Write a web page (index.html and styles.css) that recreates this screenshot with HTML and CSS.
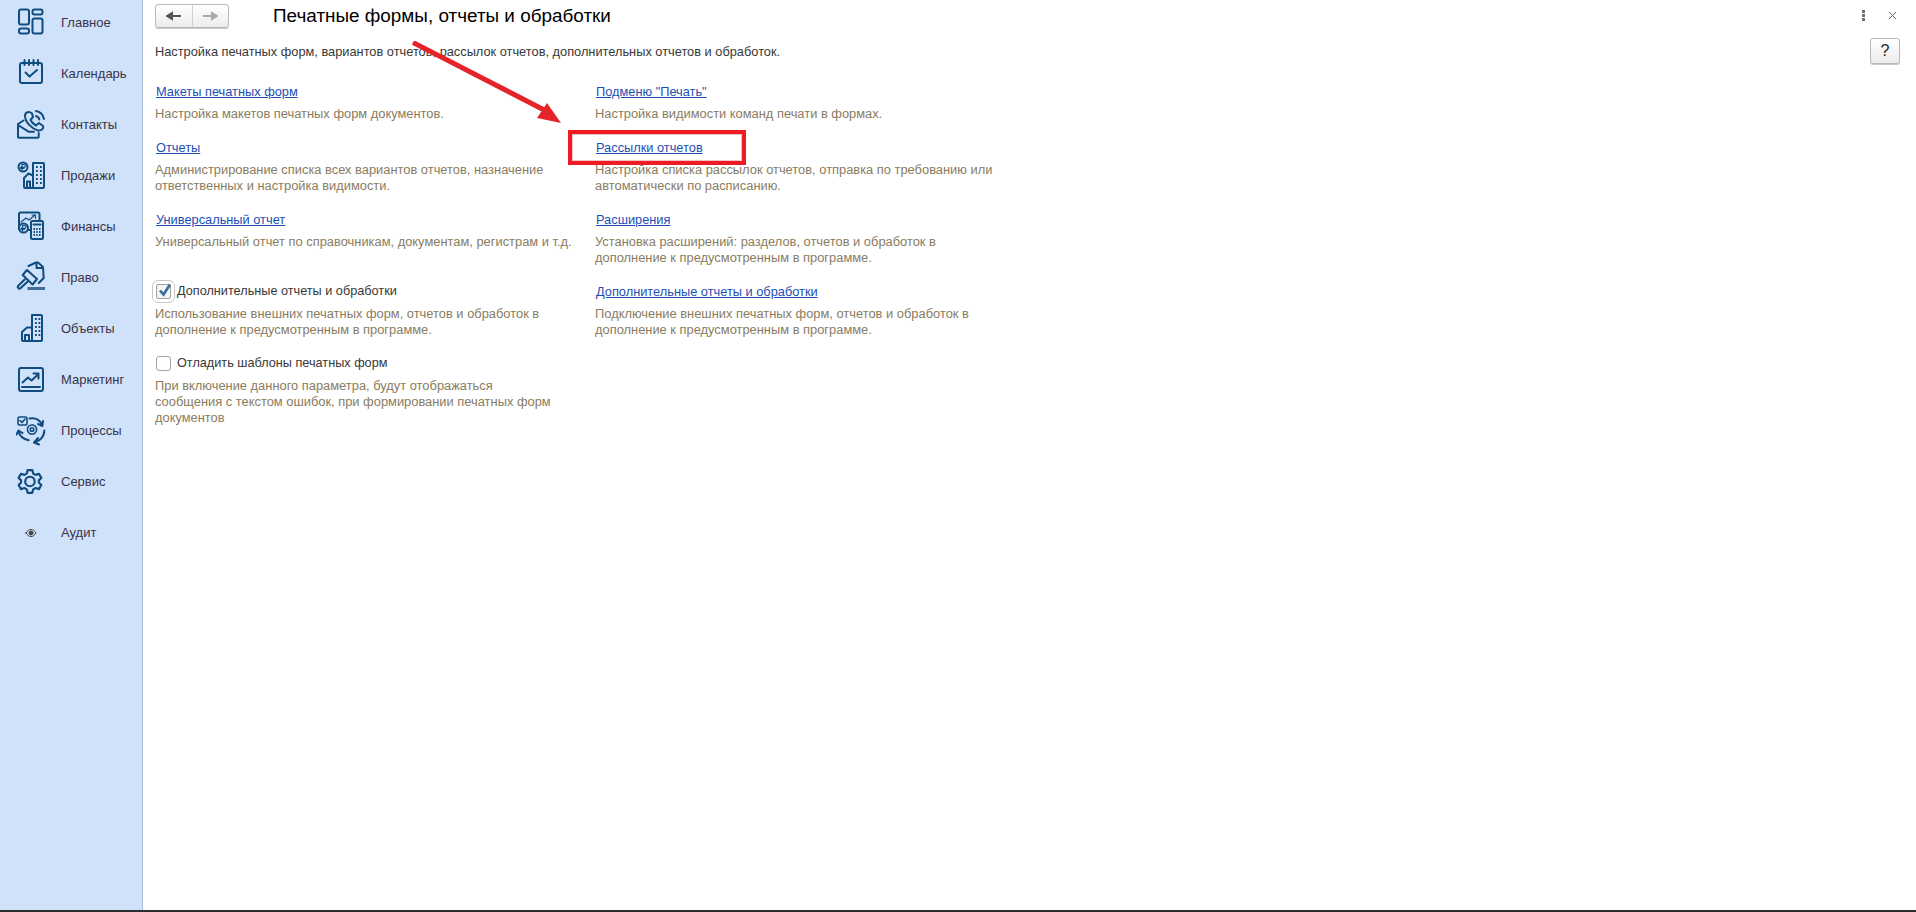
FILE: index.html
```html
<!DOCTYPE html>
<html lang="ru">
<head>
<meta charset="utf-8">
<title>Печатные формы, отчеты и обработки</title>
<link rel="stylesheet" href="styles.css">
</head>
<body>
<div class="app">
  <nav class="sidebar">
    <a class="nav-item"><svg class="nav-icon" viewBox="0 0 32 32"><rect x="3" y="3.5" width="10" height="15" rx="2"/><rect x="3" y="22.5" width="10" height="5" rx="2"/><rect x="16.5" y="3.5" width="10" height="5" rx="2"/><rect x="16.5" y="12.5" width="10" height="15" rx="2"/></svg><span>Главное</span></a>
    <a class="nav-item"><svg class="nav-icon" viewBox="0 0 32 32"><path d="M6 6h18a2 2 0 0 1 2 2v16a2 2 0 0 1-2 2H6a2 2 0 0 1-2-2V8a2 2 0 0 1 2-2z"/><path d="M8.5 3v5M13 3v5M17.500 3v5M22 3v5M9.500 15.500l4 4 7.500-6.500"/></svg><span>Календарь</span></a>
    <a class="nav-item"><svg class="nav-icon" viewBox="0 0 32 32"><path d="M16 5.500C13 3 9 4 9 8c0 6 7 13 13 14.500 4 .5 6-2.500 5-4.500l-4-3-3 2.500c-2-1-4.500-3.500-5.500-5.500L17 9z"/><path d="M20 3c4 .5 7 3.500 8 8M20 8c1.500.5 3 1.800 3.300 3.500"/><path d="M7.500 12.500L2 16v12.700a1 1 0 0 0 1 1h18.700a1 1 0 0 0 1-1V25M2 17l10.500 6.700H18"/></svg><span>Контакты</span></a>
    <a class="nav-item"><svg class="nav-icon" viewBox="0 0 32 32"><circle cx="7" cy="8" r="4.500"/><path class="thin" d="M6 11V5.500h2a1.300 1.300 0 0 1 0 2.800H4.500M4.500 9.500h3.500"/><path d="M17 4h10a1 1 0 0 1 1 1v23a1 1 0 0 1-1 1H17zM17 16.500V29H9a1 1 0 0 1-1-1V19l4.500-4.500zM11 29v-6.500h3V29"/><path class="dots" d="M20 8h1.800M24 8h1.800M20 12h1.800M24 12h1.800M20 16h1.800M24 16h1.800M20 20h1.800M24 20h1.800M20 24h1.800M24 24h1.800"/></svg><span>Продажи</span></a>
    <a class="nav-item"><svg class="nav-icon" viewBox="0 0 32 32"><path d="M15 20H5a2 2 0 0 1-2-2V4a1.500 1.500 0 0 1 1.500-1.500H22a1.500 1.500 0 0 1 1.500 1.500v7"/><path class="thin" d="M5 12l5-4 3 2 6-5M16 5h3.500v3.500"/><circle cx="7.500" cy="18" r="4.500" class="fill-bg"/><path class="thin" d="M6.500 21v-5.500h2a1.300 1.300 0 0 1 0 2.800H5M5 19.500h3.500"/><rect x="15" y="11" width="12" height="18" rx="1.500" class="fill-bg"/><path d="M17.500 14.500h7"/><path class="dots" d="M17.500 19h1.500M20.200 19h1.500M23 19h1.500M17.500 22h1.500M20.200 22h1.500M23 22h1.500M17.500 25h1.500M20.200 25h1.500M23 25h1.500"/></svg><span>Финансы</span></a>
    <a class="nav-item"><svg class="nav-icon" viewBox="0 0 32 32"><path d="M12.500 5L20 1.500h2L27 6l.7 11-5 5"/><path d="M20.500 2v5h6"/><path d="M11 9l10 9-4.500 5.500L6.700 14zM8.700 18.500L2.300 24.700a1.500 1.500 0 0 0 2.400 2.300l6.500-6"/><path class="thick" d="M11.500 27.500h17.500"/></svg><span>Право</span></a>
    <a class="nav-item"><svg class="nav-icon" viewBox="0 0 32 32"><path d="M16 3h9a1 1 0 0 1 1 1v24a1 1 0 0 1-1 1H16zM16 15.500V29H7a1 1 0 0 1-1-1V20l5-4.500zM9 29v-6h4v6"/><path class="dots" d="M19 7h1.800M22.500 7h1.800M19 11h1.800M22.500 11h1.800M19 15h1.800M22.500 15h1.800M19 19h1.800M22.500 19h1.800M19 23h1.800M22.500 23h1.800"/></svg><span>Объекты</span></a>
    <a class="nav-item"><svg class="nav-icon" viewBox="0 0 32 32"><rect x="3" y="5" width="24" height="23" rx="2"/><path d="M6.500 19.500l5.500-5 3.500 3 6.500-6M17.500 10.500h5v5M6 24h18"/></svg><span>Маркетинг</span></a>
    <a class="nav-item"><svg class="nav-icon nav-icon-fine" viewBox="0 0 32 32"><rect x="2" y="3" width="9" height="8" rx="1.500"/><path d="M4 6.500l2 2 3-3.500"/><circle cx="16" cy="15.500" r="1.800"/><circle cx="16" cy="15.500" r="4.600" stroke-dasharray="2.500 1.100"/><path class="arc" d="M13.500 4.500c5-1 10 1 12.500 6M27 7l-.6 5-4.400-2M28.300 16.500c0 6-4.500 11-10 11.500M22 24l-4 4.500 5 2M12.700 26.300C7.500 25 3.500 22 2.700 17.500M0.500 20.500L2.500 16.500l4 2.500"/></svg><span>Процессы</span></a>
    <a class="nav-item"><svg class="nav-icon" viewBox="0 0 32 32"><g transform="translate(1 3.500) scale(1.080)"><circle cx="12" cy="12" r="4.400"/><path d="M9.800 1.500h4.400l.8 3.200 2.200 1.200 3.100-1 2.200 3.800-2.300 2.300v2l2.300 2.300-2.200 3.800-3.100-1-2.200 1.200-.8 3.200H9.800L9 19.300l-2.200-1.200-3.100 1-2.200-3.800 2.300-2.300v-2L1.500 8.700l2.200-3.800 3.100 1L9 4.700z" stroke-linejoin="round"/></g></svg><span>Сервис</span></a>
    <a class="nav-item"><svg class="nav-icon nav-icon-eye" viewBox="0 0 32 32"><path d="M10 17c1.500-2.500 3-3.500 5-3.500s3.500 1 5 3.500c-1.500 2.500-3 3.500-5 3.500s-3.500-1-5-3.500z"/><circle cx="15" cy="17" r="2"/></svg><span>Аудит</span></a>
  </nav>
  <main class="content">
    <header class="topbar">
      <div class="history">
        <button class="history-btn" type="button"><svg class="history-icon" viewBox="0 0 16 12"><path d="M15 6H6V3L1 6l5 3V6"/></svg></button>
        <button class="history-btn history-btn-off" type="button"><svg class="history-icon" viewBox="0 0 16 12"><path d="M1 6h9V3l5 3-5 3V6"/></svg></button>
      </div>
      <h1 class="title">Печатные формы, отчеты и обработки</h1>
      <div class="window-tools">
        <span class="kebab"><i></i><i></i><i></i></span>
        <svg class="close" viewBox="0 0 9 9"><path d="M1 1l7 7M8 1L1 8"/></svg>
      </div>
    </header>
    <div class="intro">
      <p class="intro-text">Настройка печатных форм, вариантов отчетов, рассылок отчетов, дополнительных отчетов и обработок.</p>
      <button class="help" type="button">?</button>
    </div>
    <section class="sections">
      <div class="entry">
        <a class="link">Макеты печатных форм</a>
        <p class="desc">Настройка макетов печатных форм документов.</p>
      </div>
      <div class="entry">
        <a class="link">Подменю "Печать"</a>
        <p class="desc">Настройка видимости команд печати в формах.</p>
      </div>
      <div class="entry">
        <a class="link">Отчеты</a>
        <p class="desc">Администрирование списка всех вариантов отчетов, назначение<br>ответственных и настройка видимости.</p>
      </div>
      <div class="entry">
        <a class="link">Рассылки отчетов</a>
        <p class="desc">Настройка списка рассылок отчетов, отправка по требованию или<br>автоматически по расписанию.</p>
      </div>
      <div class="entry">
        <a class="link">Универсальный отчет</a>
        <p class="desc">Универсальный отчет по справочникам, документам, регистрам и т.д.</p>
      </div>
      <div class="entry">
        <a class="link">Расширения</a>
        <p class="desc">Установка расширений: разделов, отчетов и обработок в<br>дополнение к предусмотренным в программе.</p>
      </div>
      <div class="entry">
        <label class="check"><span class="box box-on"><svg viewBox="0 0 15 15"><path d="M3 7.500l3.500 4L13 1.500"/></svg></span>Дополнительные отчеты и обработки</label>
        <p class="desc">Использование внешних печатных форм, отчетов и обработок в<br>дополнение к предусмотренным в программе.</p>
      </div>
      <div class="entry">
        <a class="link">Дополнительные отчеты и обработки</a>
        <p class="desc">Подключение внешних печатных форм, отчетов и обработок в<br>дополнение к предусмотренным в программе.</p>
      </div>
      <div class="entry">
        <label class="check"><span class="box"></span>Отладить шаблоны печатных форм</label>
        <p class="desc">При включение данного параметра, будут отображаться<br>сообщения с текстом ошибок, при формировании печатных форм<br>документов</p>
      </div>
    </section>
  </main>
</div>
<div class="taskbar-edge"></div>
<svg class="arrow" viewBox="0 0 170 100"><path class="arrow-line" d="M1 1.500L140 73"/><path class="arrow-head" d="M149 82L125 77L135 62z"/></svg>
<div class="highlight"></div>
</body>
</html>
```
FILE: styles.css
```css
* { box-sizing: border-box; }
html, body { margin: 0; height: 100%; overflow: hidden; }
body {
  position: relative;
  display: flex;
  flex-direction: column;
  background: #fff;
  font-family: "Liberation Sans", Arial, sans-serif;
  font-size: 12.8px;
  color: #383838;
}
.app { flex: 1; display: flex; min-height: 0; }
.taskbar-edge { height: 2px; background: #2b2d2f; }

.sidebar {
  width: 143px;
  flex: none;
  display: flex;
  flex-direction: column;
  gap: 7px;
  padding-left: 16px;
  background: #cfe2fa;
  border-right: 1px solid #a8b8d8;
  font-size: 13px;
}
.nav-item { height: 44px; display: flex; align-items: center; gap: 13px; color: #3a3348; }
.nav-icon { width: 32px; height: 32px; flex: none; fill: none; stroke: #0f4c7f; stroke-width: 2; stroke-linecap: round; stroke-linejoin: round; }
.nav-icon .thin { stroke-width: 1.2; }
.nav-icon .thick { stroke-width: 3; stroke: #3f6f98; stroke-linecap: butt; }
.nav-icon .dots { stroke-linecap: butt; stroke-width: 1.8; }
.nav-icon .fill-bg { fill: #cfe2fa; }
.nav-icon .arc { stroke-width: 2; }
.nav-icon-fine { stroke-width: 1.6; }
.nav-icon-eye { stroke: #444; stroke-width: 1; }
.nav-icon-eye circle { fill: #444; }

.content { flex: 1; min-width: 0; display: flex; flex-direction: column; padding-left: 12px; }
.topbar { height: 38px; display: flex; align-items: flex-start; padding-top: 4px; }
.history {
  display: flex;
  width: 74px;
  height: 24px;
  border: 1px solid #b8b8b8;
  border-radius: 3px;
  background: linear-gradient(#fff, #ececec);
  box-shadow: 0 1px 0 #c9c9c9;
}
.history-btn { flex: 1; padding: 0; border: 0; background: none; display: flex; align-items: center; justify-content: center; }
.history-btn + .history-btn { border-left: 1px solid #cfcfcf; }
.history-icon { width: 16px; height: 12px; fill: #555; stroke: #555; stroke-width: 2; }
.history-btn-off .history-icon { fill: #a9a9a9; stroke: #a9a9a9; }
.title { margin: -1px 0 0 44px; font-size: 18.9px; font-weight: 400; line-height: 26px; color: #000; }
.window-tools { margin-left: auto; display: flex; gap: 23px; padding: 6px 19px 0 0; }
.kebab { display: flex; flex-direction: column; gap: 1px; margin-left: -1px; }
.kebab i { width: 3px; height: 3px; background: #707070; }
.close { width: 9px; height: 9px; margin-top: 1px; stroke: #666; stroke-width: 1; fill: none; }

.intro { height: 26px; display: flex; align-items: center; justify-content: space-between; padding-right: 16px; }
.intro-text { margin: 0; }
.help {
  width: 30px;
  height: 26px;
  padding: 0;
  border: 1px solid #b8b8b8;
  border-radius: 3px;
  background: linear-gradient(#fff, #ececec);
  box-shadow: 0 1px 0 #c9c9c9;
  font: 400 16px "Liberation Sans", Arial, sans-serif;
  color: #222;
}

.sections {
  margin-top: 19px;
  display: grid;
  grid-template-columns: 440px 400px;
  row-gap: 17px;
  align-items: start;
  padding-left: 1px;
}
.entry { display: flex; flex-direction: column; gap: 7px; }
.link { height: 16px; line-height: 18px; color: #1c4fb4; text-decoration: underline; }
.desc { margin: 0 0 0 -1px; line-height: 16px; font-size: 12.88px; color: #8a7c61; white-space: nowrap; }
.check { display: flex; align-items: center; gap: 6px; height: 16px; font-size: 12.7px; }
.box {
  width: 15px;
  height: 15px;
  flex: none;
  border: 1px solid #a4a4a4;
  border-radius: 3px;
  background: #fff;
  position: relative;
}
.box-on { outline: 1px solid #c8c8c8; outline-offset: 3px; border-radius: 2px; background: #f1f5f9; }
.box svg { position: absolute; left: 0; top: -2px; width: 15px; height: 15px; fill: none; stroke: #3d6b96; stroke-width: 2.6; }

.arrow { position: absolute; left: 412px; top: 41px; width: 170px; height: 100px; }
.arrow-line { stroke: #e5242a; stroke-width: 5; fill: none; }
.arrow-head { fill: #e5242a; }
.highlight { position: absolute; left: 568px; top: 130px; width: 178px; height: 35px; border: 4px solid #ed1c24; outline: 1px solid #f0c4c6; outline-offset: -5px; }
```
